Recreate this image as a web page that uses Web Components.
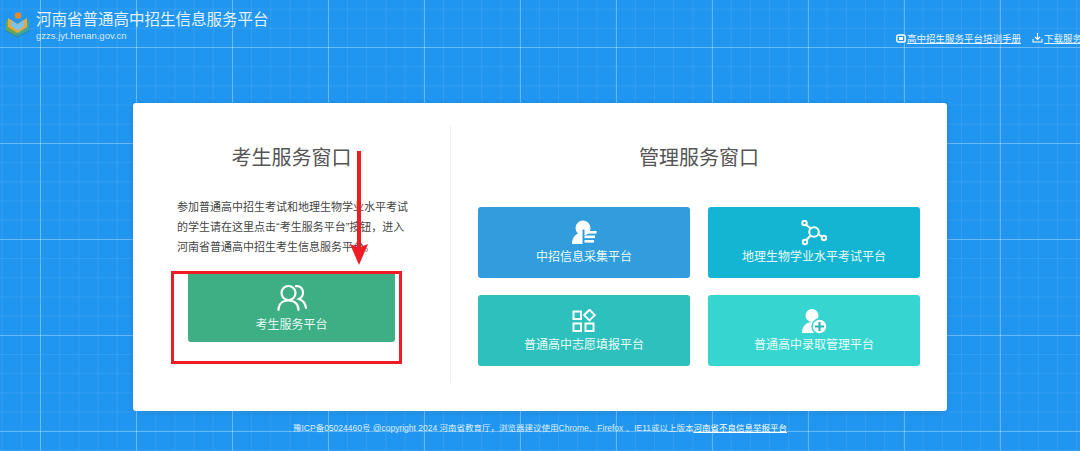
<!DOCTYPE html>
<html><head><meta charset="utf-8"><style>
html,body{margin:0;padding:0;height:451px;overflow:hidden}
body{font-family:"Liberation Sans","Noto Sans CJK SC",sans-serif}
</style></head><body>
<gz-page>
<gz-header slot="header"></gz-header>
<gz-card slot="card">
<gz-student slot="left"></gz-student>
<gz-manage slot="right"></gz-manage>
</gz-card>
<gz-footer slot="footer"></gz-footer>
</gz-page>
<script>
const I={
users:'<svg width="30" height="28" viewBox="0 0 30 28" fill="none" stroke="#fff" stroke-width="2.2" stroke-linecap="round"><circle cx="11.5" cy="9" r="7"/><path d="M1.5 26c0-6 4-9.5 10-9.5s10 3.500 10 9.500"/><path d="M19 2.200c4-.6 7 2.300 7 6.300 0 3-1.500 5.200-4 6.500 4 1.500 6.500 4.500 7 9"/></svg>',
info:'<svg width="26" height="26" viewBox="0 0 26 26" fill="#fff"><circle cx="12" cy="8" r="7.500"/><path d="M1 24c0-6 3-9.500 7-11 1.500 1 3 1.500 4 1.500V24z" /><rect x="13" y="11" width="12.500" height="2.600" fill="#fff"/><rect x="13" y="15.500" width="11" height="2.600"/><rect x="13" y="20" width="10" height="2.600"/><path d="M11.500 9.600h2v15h-2z" fill="#319ddd"/></svg>',
graph:'<svg width="26" height="26" viewBox="0 0 26 26" fill="none" stroke="#fff" stroke-width="2"><circle cx="13" cy="12" r="4.800"/><circle cx="3.500" cy="3" r="2.200"/><circle cx="23" cy="18" r="2.200"/><circle cx="4" cy="22" r="2.200"/><path d="M5 4.800l5 4M17.500 14.200l3.500 2.500M9.500 15.500l-4 4.500"/></svg>',
apps:'<svg width="24" height="24" viewBox="0 0 24 24" fill="none" stroke="#fff" stroke-width="2"><rect x="1.500" y="2.500" width="7.500" height="7.500"/><rect x="1.500" y="14.500" width="7.500" height="7.500"/><rect x="13.500" y="14.500" width="8" height="7.500"/><path d="M17.500 .8l5.300 5.300-5.300 5.300-5.300-5.300z"/></svg>',
add:'<svg width="26" height="26" viewBox="0 0 26 26"><circle cx="11" cy="7.500" r="6.500" fill="#fff"/><path d="M1 25c0-7 4-11 10-11s10 4 10 11z" fill="#fff"/><circle cx="18.500" cy="18.500" r="7.500" fill="#fff" stroke="#36d5d0" stroke-width="1.500"/><circle cx="18.500" cy="18.500" r="5.600" fill="#fff"/><path d="M18.500 14v9M14 18.500h9" stroke="#2bb9b5" stroke-width="2.200"/></svg>'
};
function def(name,html){customElements.define(name,class extends HTMLElement{constructor(){super();this.attachShadow({mode:'open'}).innerHTML=typeof html==='function'?html(this):html}})}
def('gz-page',`<style>
:host{display:flex;flex-direction:column;position:relative;width:1080px;height:451px;overflow:hidden;
background-color:#2196f0;
background-image:
linear-gradient(rgba(255,255,255,.28) 1px,transparent 1px),
linear-gradient(90deg,rgba(255,255,255,.28) 1px,transparent 1px),
linear-gradient(rgba(255,255,255,.08) 1px,transparent 1px),
linear-gradient(90deg,rgba(255,255,255,.08) 1px,transparent 1px);
background-size:96px 96px,96px 96px,19.2px 19.2px,19.2px 19.2px;
background-position:0 47px,40px 0,0 47px,40px 0}
.main{display:flex;justify-content:center;margin-top:52px}
</style><slot name="header"></slot><div class="main"><slot name="card"></slot></div><slot name="footer"></slot>`);
def('gz-header',`<style>
:host{display:flex;justify-content:space-between;height:51px;color:#fff;white-space:nowrap}
.l{display:flex;padding:11px 0 0 4px;gap:5px}
.t{font-size:15.500px;line-height:18px;color:#e4f2fe}
.s{font-size:9.500px;line-height:12px;margin-top:1px;color:#d5eafd}
.r{display:flex;gap:11px;padding-top:25px;font-size:9.500px;line-height:13px;width:184px;overflow:hidden;flex:none;color:#e8f4ff}
.r span{display:inline-flex;align-items:center;gap:1px;flex:none}
u{text-underline-offset:1px}
svg{flex:none}
</style>
<div class="l"><svg width="27" height="28" viewBox="0 0 27 28">
<path d="M1 20l12.500 7L26 20l-1.500-1-11 5.500L2.500 19z" fill="#2b8bb3"/>
<path d="M2 9l11 6v10L2 19z" fill="#6aa84f"/><path d="M25 9l-11 6v10l11-6z" fill="#3fa9a0"/>
<path d="M4 7l9.500 6L23 7v9l-9.500 6L4 16z" fill="#e9a93a"/><path d="M7 9l6.500 4.500L20 9v6l-6.500 4.500L7 15z" fill="#7fc2e8"/>
<circle cx="14" cy="4.500" r="3.200" fill="#e98a2a"/></svg>
<div><div class="t">河南省普通高中招生信息服务平台</div><div class="s">gzzs.jyt.henan.gov.cn</div></div></div>
<div class="r"><span><svg width="10" height="9" viewBox="0 0 10 9"><rect x=".8" y="1" width="8.400" height="7" rx="1.500" fill="none" stroke="#fff" stroke-width="1.400"/><rect x="3" y="3" width="4" height="3" fill="#fff"/></svg><u>高中招生服务平台培训手册</u></span>
<span><svg width="11" height="10" viewBox="0 0 11 10" fill="none" stroke="#fff" stroke-width="1.100"><path d="M5.500 0v6.500M3 4l2.500 2.500L8 4M1 6v3h9V6"/></svg><u>下载服务平台操作手册</u></span></div>`);
def('gz-card',`<style>
:host{display:grid;grid-template-columns:318px 496px;width:814px;height:308px;background:#fff;border-radius:3px;box-shadow:0 1px 6px rgba(0,0,0,.12)}
.a{padding-top:23px;border-right:1px solid #eceff1;margin:23px 0 28px;padding-top:0}
.b{margin:23px 0 28px}
</style><div class="a"><slot name="left"></slot></div><div class="b"><slot name="right"></slot></div>`);
def('gz-student',`<style>
:host{display:flex;flex-direction:column;align-items:center;position:relative;height:257px}
h2{margin:20px 0 0;font-size:20px;line-height:24px;font-weight:400;color:#555}
p{margin:27px 0 0;width:229px;font-size:11px;line-height:20px;color:#444;white-space:nowrap}
gz-tile{margin-top:14px;width:207px;height:71px}
.box{position:absolute;left:38px;top:144px;width:224px;height:87px;border:3px solid #ee1c25;pointer-events:none;top:145px;box-sizing:content-box;width:225px;height:87px}
.arrow{position:absolute;left:216px;top:25px}
</style>
<h2>考生服务窗口</h2>
<p>参加普通高中招生考试和地理生物学业水平考试<br>的学生请在这里点击“考生服务平台”按钮，进入<br>河南省普通高中招生考生信息服务平台。</p>
<gz-tile color="#3eae84" icon="users" large>考生服务平台</gz-tile>
<div class="box"></div>
<svg class="arrow" width="20" height="114" viewBox="0 0 20 114"><path d="M10 0v100" stroke="#ee1c25" stroke-width="4" stroke-linecap="round"/><path d="M1 93l9 3.500 9-3.500-9 21z" fill="#ee1c25"/></svg>`);
def('gz-manage',`<style>
:host{display:flex;flex-direction:column;align-items:center;height:257px}
h2{margin:20px 0 0;font-size:20px;line-height:24px;font-weight:400;color:#555;}
.g{display:grid;grid-template-columns:212px 212px;grid-auto-rows:71px;gap:17px 18px;margin-top:37px}
</style><h2>管理服务窗口</h2><div class="g">
<gz-tile color="#319ddd" icon="info">中招信息采集平台</gz-tile>
<gz-tile color="#14b5d2" icon="graph">地理生物学业水平考试平台</gz-tile>
<gz-tile color="#2ec0bc" icon="apps">普通高中志愿填报平台</gz-tile>
<gz-tile color="#36d5d0" icon="add">普通高中录取管理平台</gz-tile></div>`);
def('gz-tile',t=>`<style>
:host{display:flex;flex-direction:column;align-items:center;justify-content:flex-start;box-sizing:border-box;border-radius:3px;background:${t.getAttribute('color')};color:#e8fbf8;font-size:12px;line-height:16px;padding-top:${t.hasAttribute('large')?'13px':'12px'};gap:${t.hasAttribute('large')?'5px':'2px'}}
.i{height:28px;display:flex;align-items:center}
</style><div class="i">${I[t.getAttribute('icon')]}</div><slot></slot>`);
def('gz-footer',`<style>
:host{display:block;text-align:center;font-size:8.500px;line-height:12px;color:#dcedfd;margin-top:11px;white-space:nowrap}
u{color:#fff;text-underline-offset:1px}
</style>豫ICP备05024460号 @copyright 2024 河南省教育厅，浏览器建议使用Chrome、Firefox 、IE11或以上版本<u>河南省不良信息举报平台</u>`);
</script></body></html>
